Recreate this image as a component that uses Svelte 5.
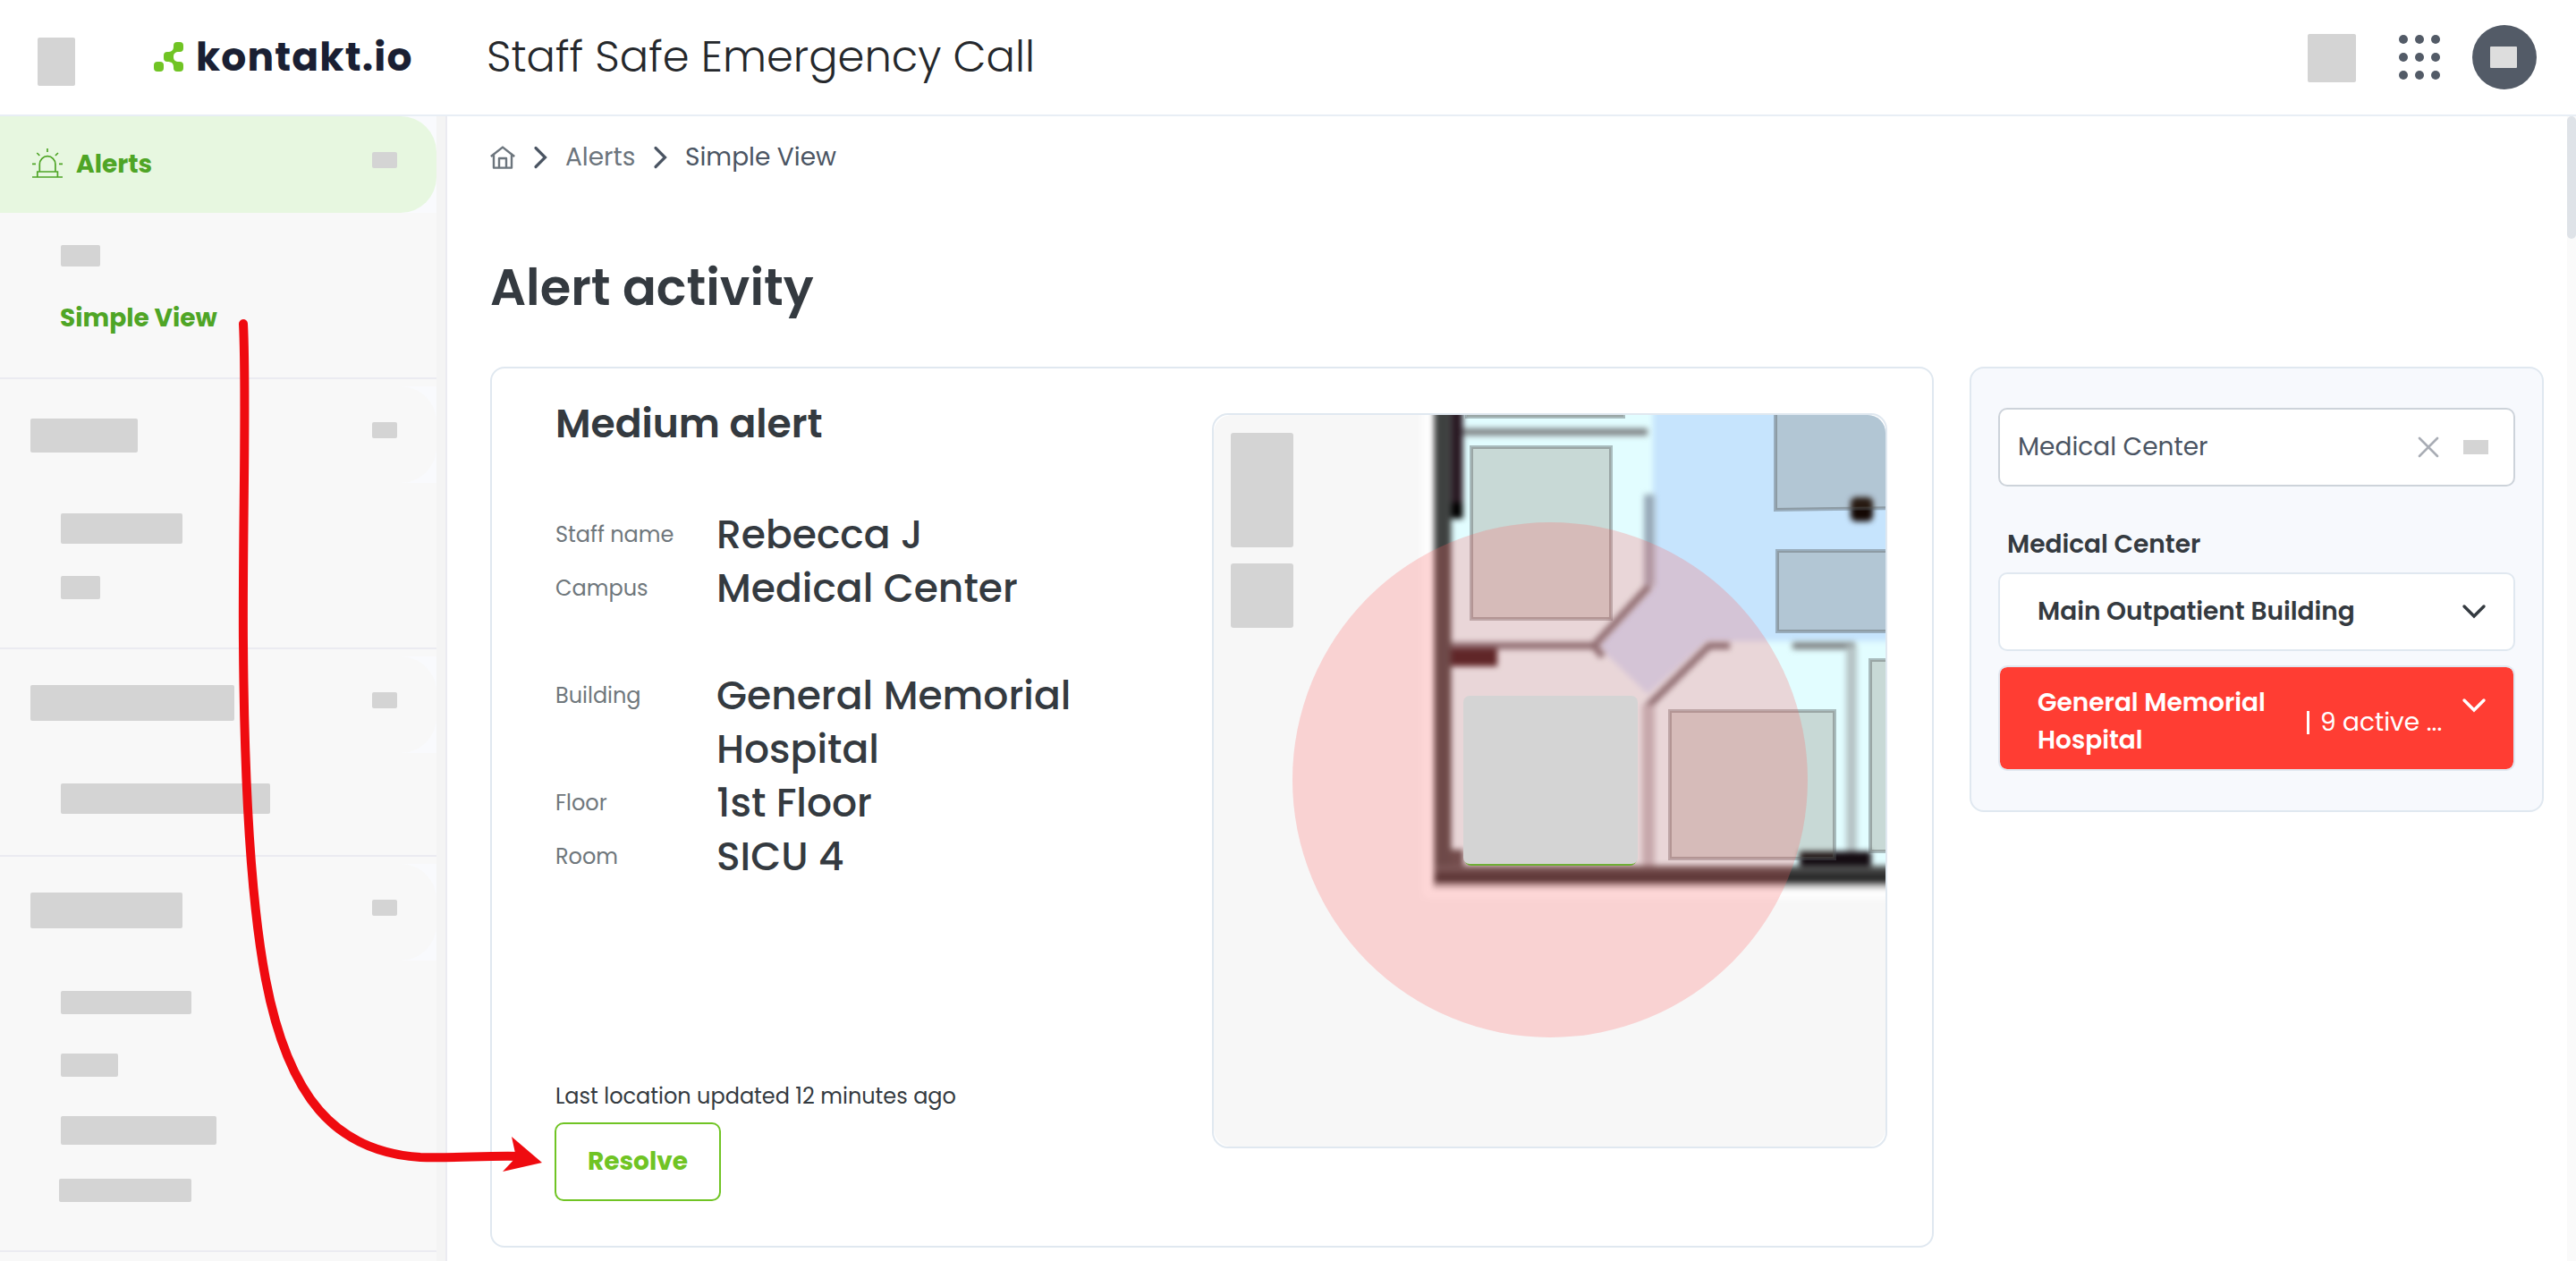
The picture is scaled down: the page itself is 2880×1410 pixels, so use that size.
<script lang="ts">
  type Item = { w: number; h: number; top: number; left?: number };
  type Group = { head: Item; height: number; items: Item[] };

  // redacted menu groups, sizes in px
  const groups: Group[] = [
    { head: { w: 120, h: 38, top: 36 }, height: 302, items: [{ w: 136, h: 34, top: 34 }, { w: 44, h: 26, top: 36 }] },
    { head: { w: 228, h: 40, top: 32 }, height: 232, items: [{ w: 234, h: 34, top: 34 }] },
    {
      head: { w: 170, h: 40, top: 32 },
      height: 442,
      items: [
        { w: 146, h: 26, top: 34 },
        { w: 64, h: 26, top: 44 },
        { w: 174, h: 32, top: 44 },
        { w: 148, h: 26, top: 38, left: 66 },
      ],
    },
  ];

  const details = [
    { label: 'Staff name', value: 'Rebecca J' },
    { label: 'Campus', value: 'Medical Center', gap: true },
    { label: 'Building', value: 'General Memorial Hospital' },
    { label: 'Floor', value: '1st Floor' },
    { label: 'Room', value: 'SICU 4' },
  ];

  const dots = [0, 1, 2, 3, 4, 5, 6, 7, 8];
</script>

<div class="app">
  <header>
    <span class="ph menu"></span>
    <div class="logo">
      <svg width="33" height="33" viewBox="0 0 33 33" fill="#70c424">
        <rect x="22" y="0" width="11" height="11" rx="4" />
        <rect x="11" y="11" width="11" height="11" rx="4" />
        <rect x="22" y="22" width="11" height="11" rx="4" />
        <rect x="0" y="22" width="11" height="11" rx="4" />
        <path d="M15 11c5 0 7-2 7-6l6 6c-4 0-6 2-6 5zM15 22c5 0 7 2 7 6l6-6c-4 0-6-2-6-5z" />
      </svg>
      <span>kontakt.io</span>
    </div>
    <span class="title">Staff Safe Emergency Call</span>
    <span class="ph bell"></span>
    <div class="apps">
      {#each dots as dot (dot)}<i></i>{/each}
    </div>
    <div class="avatar"><span></span></div>
  </header>

  <div class="body">
    <nav>
      <div class="menu-col">
        <div class="group first">
          <div class="row">
            <div class="pill active">
              <svg width="34" height="33" viewBox="0 0 34 33" fill="none" stroke="#4fa526" stroke-width="1.7">
                <path d="M0 32h34M5.8 32v-6h22.6v6M8.3 26V17.5a8.8 8.8 0 0 1 17.6 0V26M17 0v4M5.3 5l3 3M28.9 5l-3 3M0 17.3h4M30 17.3h4" />
              </svg>
              <span class="label">Alerts</span>
              <span class="ph toggle"></span>
            </div>
          </div>
          <span class="ph sub"></span>
          <span class="current">Simple View</span>
        </div>
        {#each groups as group}
          <div class="group" style="height: {group.height}px">
            <div class="row">
              <div class="pill">
                <span class="ph" style="width: {group.head.w}px; height: {group.head.h}px; margin-top: {group.head.top}px"></span>
                <span class="ph toggle"></span>
              </div>
            </div>
            {#each group.items as item}
              <span
                class="ph item"
                style="width: {item.w}px; height: {item.h}px; margin-top: {item.top}px; margin-left: {item.left ?? 68}px"
              ></span>
            {/each}
          </div>
        {/each}
      </div>
    </nav>

    <main>
      <div class="crumbs">
        <svg width="30" height="28" viewBox="0 0 30 28" fill="none" stroke="#6c757d" stroke-width="2.4" stroke-linejoin="round">
          <path d="M.8 13L14 2.6 27.2 13M4 11v14.6h20V11M10 25V15h8v10" />
        </svg>
        <svg class="sep" width="16" height="28" viewBox="0 0 16 28"><path d="M3 3.5l10.5 10.5L3 24.5" /></svg>
        <span class="c-alerts">Alerts</span>
        <svg class="sep" width="16" height="28" viewBox="0 0 16 28"><path d="M3 3.5l10.5 10.5L3 24.5" /></svg>
        <span class="c-view">Simple View</span>
      </div>
      <h1>Alert activity</h1>

      <div class="columns">
        <section class="card">
          <div class="info">
            <h2>Medium alert</h2>
            <dl>
              {#each details as d}
                <div class:gap={d.gap}>
                  <dt>{d.label}</dt>
                  <dd>{d.value}</dd>
                </div>
              {/each}
            </dl>
            <p>Last location updated 12 minutes ago</p>
            <button type="button">Resolve</button>
          </div>

          <div class="map">
            <svg width="751" height="818" viewBox="1357 464 751 818">
              <defs>
                <filter id="soft" x="-10%" y="-10%" width="120%" height="120%" color-interpolation-filters="sRGB">
                  <feGaussianBlur stdDeviation="3" />
                </filter>
                <filter id="halo" x="-10%" y="-10%" width="120%" height="120%" color-interpolation-filters="sRGB">
                  <feGaussianBlur stdDeviation="5" />
                </filter>
                <linearGradient id="wall" x1="0" y1="0" x2="0" y2="1">
                  <stop offset="0" stop-color="#5c5e5e" />
                  <stop offset=".6" stop-color="#2c2c2c" />
                  <stop offset="1" stop-color="#1c1c1c" />
                </linearGradient>
              </defs>
              <rect x="1357" y="464" width="751" height="818" fill="#f7f7f7" />
              <path d="M1597 430V998H2150" fill="none" stroke="#fff" stroke-width="12" filter="url(#halo)" />
              <g filter="url(#soft)">
                <rect x="1612" y="440" width="520" height="540" fill="#e2fdff" />
                <path d="M1848 440H2130V717H1908L1842 776L1786 722L1848 655Z" fill="#c6e4fd" />
              </g>
              <g filter="url(#soft)" fill="none" stroke="#7d8183" stroke-width="8">
                <path d="M1636 483H1842" />
                <path d="M1622 722H1782L1792 734M1782 722L1844 655" stroke="#6c7177" />
                <path d="M1844 553V655" stroke="#97a8b8" stroke-width="12" />
                <path d="M1934 722H1911L1842 790" stroke="#6c7177" />
                <path d="M1843 788V972" stroke="#b4bfc4" stroke-width="14" />
                <path d="M2004 722H2074" />
                <path d="M2070 722V960" stroke="#b5c3c5" stroke-width="12" />
                <path d="M1602 989H2140" stroke="#b9b9b9" stroke-width="8" />
                <path d="M1622 735H1674" stroke="#2b1215" stroke-width="20" />
                <path d="M1613 440V986" stroke="#3e4140" stroke-width="19" />
                <path d="M1629 440V562" stroke="#281822" stroke-width="13" />
                <path d="M1629 562V580" stroke="#000" stroke-width="13" />
                <path d="M1629 950V972" stroke="#444" stroke-width="14" />
                <path d="M2012 961H2092" stroke="#140c12" stroke-width="18" />
                <rect x="1604" y="968" width="530" height="19" fill="url(#wall)" stroke="none" />
                <rect x="2069" y="556" width="25" height="27" rx="6" fill="#140804" stroke="none" />
              </g>
              <g fill="#6e5a46" fill-opacity=".22" stroke="#55595c" stroke-opacity=".4" stroke-width="4">
                <rect x="1645" y="500" width="156" height="192" />
                <rect x="1640" y="440" width="175" height="26" />
                <path d="M1985 440V570L2130 568V440Z" />
                <rect x="1987" y="616" width="150" height="90" />
                <rect x="1867" y="795" width="184" height="165" />
                <rect x="2091" y="738" width="60" height="214" />
              </g>
              <circle cx="1733" cy="872" r="288" fill="#ff6262" fill-opacity=".25" />
              <rect x="1637" y="779" width="193" height="189" rx="8" fill="#6fae35" />
              <rect x="1636" y="778" width="195" height="188" rx="7" fill="#d4d4d4" />
              <rect x="1376" y="484" width="70" height="128" rx="3" fill="#d4d4d4" />
              <rect x="1376" y="630" width="70" height="72" rx="3" fill="#d4d4d4" />
            </svg>
          </div>
        </section>

        <aside>
          <div class="select">
            <span>Medical Center</span>
            <svg width="24" height="24" viewBox="0 0 24 24"><path d="M2 2l20 20M22 2L2 22" stroke="#a9adb5" stroke-width="2.6" stroke-linecap="round" /></svg>
            <span class="ph"></span>
          </div>
          <h3>Medical Center</h3>
          <div class="building">
            <span class="name">Main Outpatient Building</span>
            <svg width="28" height="18" viewBox="0 0 28 18"><path d="M3 3l11 11L25 3" /></svg>
          </div>
          <div class="building alarm">
            <span class="name">General Memorial Hospital</span>
            <span class="count"><i></i><span>9 active ...</span></span>
            <svg width="28" height="18" viewBox="0 0 28 18"><path d="M3 3l11 11L25 3" /></svg>
          </div>
        </aside>
      </div>
    </main>

    <div class="track"><div class="thumb"></div></div>
  </div>

  <!-- pointer from the menu entry to the Resolve button -->
  <svg class="pointer" width="640" height="1000" viewBox="0 340 640 1000">
    <path
      d="M272 362C276 440 271 600 272 720C273 860 279 1000 297 1095C322 1226 374 1288 470 1294C510 1295 545 1292 582 1293"
      fill="none" stroke="#ef0b10" stroke-width="10" stroke-linecap="round"
    />
    <path d="M572 1271L606 1300L562 1310L577 1294Z" fill="#ef0b10" />
  </svg>
</div>

<style>
  :global(body) {
    margin: 0;
    overflow: hidden;
  }
  .app {
    position: relative;
    display: flex;
    flex-direction: column;
    width: 2880px;
    height: 1410px;
    overflow: hidden;
    background: #fff;
    color: #343a40;
    font-family: Poppins, Inter, 'Open Sans', sans-serif;
    font-size: 28px;
    white-space: nowrap;
  }
  .app * {
    box-sizing: border-box;
  }
  .ph {
    display: block;
    flex: none;
    background: #d4d4d4;
    border-radius: 2px;
  }

  header {
    display: flex;
    flex: none;
    align-items: center;
    height: 130px;
    padding: 0 44px 0 42px;
    border-bottom: 2px solid #e8eef5;
  }
  .menu {
    width: 42px;
    height: 54px;
    margin-top: 10px;
  }
  .logo {
    display: flex;
    align-items: center;
    width: 372px;
    margin-left: 88px;
    color: #1a1f33;
  }
  .logo svg {
    margin-top: -2px;
  }
  .logo span {
    margin-left: 14px;
    font-size: 44px;
    font-weight: 700;
    letter-spacing: 1.15px;
    line-height: 60px;
  }
  .title {
    flex: 1;
    margin-top: -1px;
    color: #25282c;
    font-size: 48px;
    font-weight: 300;
  }
  .bell {
    width: 54px;
    height: 54px;
    margin-top: 2px;
  }
  .apps {
    display: grid;
    grid-template-columns: repeat(3, 10px);
    gap: 10px 8px;
    margin: 0 36px 0 48px;
  }
  .apps i {
    height: 10px;
    border-radius: 50%;
    background: #535b67;
  }
  .avatar {
    display: flex;
    align-items: center;
    justify-content: center;
    width: 72px;
    height: 72px;
    border-radius: 50%;
    background: #535b67;
  }
  .avatar span {
    width: 30px;
    height: 24px;
    margin-right: 2px;
    background: #ddd;
    border-radius: 1px;
  }

  .body {
    display: flex;
    flex: 1;
    min-height: 0;
  }
  nav {
    flex: none;
    width: 500px;
    padding-right: 10px;
    border-right: 2px solid #ebebf1;
    background: #f4f4f4;
  }
  .menu-col {
    height: 100%;
    background: #f8f8f8;
  }
  .group {
    padding-top: 8px;
    border-bottom: 2px solid #ebebf1;
  }
  .group.first {
    height: 294px;
    padding-top: 0;
  }
  .row {
    height: 108px;
    background: #f9fafd;
  }
  .pill {
    display: flex;
    align-items: flex-start;
    justify-content: space-between;
    height: 100%;
    padding: 0 44px 0 34px;
    border-radius: 0 40px 40px 0;
    background: #f8f8f8;
  }
  .pill.active {
    background: #e7f7e0;
  }
  .pill .toggle {
    width: 28px;
    height: 18px;
    margin-top: 40px;
  }
  .pill svg {
    margin: 36px 15px 0 2px;
  }
  .label,
  .current {
    color: #4fa526;
    font-weight: 700;
    line-height: 40px;
  }
  .label {
    flex: 1;
    margin-top: 34px;
  }
  .current {
    display: block;
    margin: 38px 0 0 67px;
  }
  .sub {
    width: 44px;
    height: 24px;
    margin: 36px 0 0 68px;
  }

  main {
    flex: 1;
    min-width: 0;
    padding-left: 48px;
  }
  .crumbs {
    display: flex;
    align-items: center;
    height: 40px;
    margin-top: 26px;
    color: #4b5563;
  }
  .sep {
    margin: 0 20.5px 0 17.5px;
    fill: none;
    stroke: #4b5563;
    stroke-width: 3.2;
    stroke-linecap: round;
  }
  .c-alerts {
    width: 80px;
    color: #6c757d;
  }
  h1,
  h2,
  h3,
  p,
  dl,
  dd {
    margin: 0;
    font-weight: 600;
  }
  h1 {
    height: 84px;
    margin-top: 84px;
    font-size: 56px;
    line-height: 84px;
  }
  .columns {
    display: flex;
    align-items: flex-start;
    gap: 40px;
    margin-top: 46px;
  }
  .card {
    display: flex;
    width: 1614px;
    height: 985px;
    padding: 50px 50px 0 71px;
    border: 2px solid #e0e8f0;
    border-radius: 16px;
  }
  .info {
    flex: 1;
  }
  h2 {
    margin-top: -18px;
    font-size: 44px;
    line-height: 60px;
  }
  dl {
    margin-top: 64px;
  }
  dl div {
    display: flex;
    line-height: 60px;
  }
  dl .gap {
    margin-bottom: 60px;
  }
  dt {
    width: 180px;
    color: #6f777c;
    font-size: 24px;
    font-weight: 400;
  }
  dd {
    width: 420px;
    font-size: 44px;
    font-weight: 500;
    white-space: normal;
  }
  p {
    margin-top: 218px;
    font-size: 24px;
    font-weight: 400;
    line-height: 40px;
  }
  button {
    width: 186px;
    height: 88px;
    margin: 9px 0 0 -1px;
    border: 2.5px solid #70c424;
    border-radius: 10px;
    background: #fff;
    color: #70c424;
    font: inherit;
    font-weight: 700;
  }
  .map {
    flex: none;
    width: 755px;
    height: 822px;
    overflow: hidden;
    border: 2px solid #e0e8f0;
    border-radius: 18px;
  }
  .map svg {
    display: block;
    border-radius: 20px;
  }

  aside {
    width: 642px;
    height: 498px;
    padding: 44px 30px 0;
    border: 2px solid #e0e8f0;
    border-radius: 16px;
    background: #f7f9fd;
  }
  .select {
    display: flex;
    align-items: center;
    height: 88px;
    padding: 0 28px 0 20px;
    border: 2px solid #cdd3da;
    border-radius: 10px;
    background: #fff;
    color: #4b5563;
  }
  .select span:first-child {
    flex: 1;
  }
  .select .ph {
    width: 28px;
    height: 16px;
    margin-left: 27px;
    border-radius: 0;
  }
  h3 {
    margin: 44px 0 11px 10px;
    font-size: 28px;
    line-height: 41px;
  }
  .building {
    display: flex;
    align-items: center;
    height: 88px;
    padding: 0 30px 0 42px;
    border: 2px solid #e0e8f0;
    border-radius: 10px;
    background: #fff;
    font-weight: 600;
    line-height: 42px;
  }
  .building .name {
    flex: 1;
  }
  .building svg {
    fill: none;
    stroke: #343a40;
    stroke-width: 3.4;
    stroke-linecap: round;
  }
  .building.alarm {
    height: 118px;
    margin-top: 16px;
    background: #ff3d33;
    background-clip: padding-box;
    color: #fff;
  }
  .alarm .name {
    flex: none;
    width: 301px;
    margin-top: 8px;
    padding-right: 20px;
    white-space: normal;
  }
  .alarm .count {
    display: flex;
    flex: 1;
    align-items: center;
    margin-top: 9px;
    font-weight: 400;
  }
  .count i {
    width: 3px;
    height: 26px;
    margin-right: 12px;
    background: #fff;
  }
  .alarm svg {
    margin-bottom: 28px;
    stroke: #fff;
  }
  .track {
    width: 10px;
    background: #fafafa;
  }
  .thumb {
    height: 137px;
    border-radius: 5px;
    background: #dfe3e8;
  }
  .pointer {
    position: absolute;
    top: 340px;
    left: 0;
    pointer-events: none;
  }
</style>
